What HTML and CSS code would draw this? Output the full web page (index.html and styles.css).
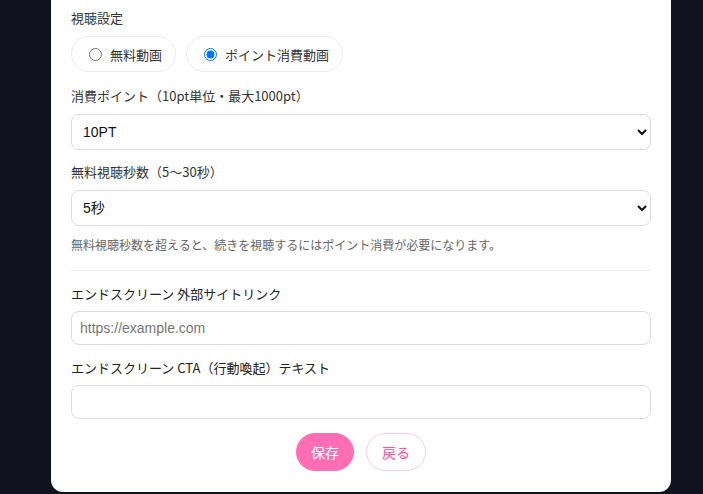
FILE: index.html
```html
<!DOCTYPE html>
<html lang="ja">

<head>
    <meta charset="UTF-8">
    <meta name="viewport" content="width=device-width, initial-scale=1.0">
    <title>動画設定</title>
    <link rel="stylesheet" href="styles.css">
</head>

<body>
    <div class="card">
        <div class="field field-first">
            <div class="label">視聴設定</div>
            <div class="radio-group">
                <label class="pill"><input type="radio" name="mode"> 無料動画</label>
                <label class="pill"><input type="radio" name="mode" checked> ポイント消費動画</label>
            </div>
        </div>

        <div class="field">
            <div class="label">消費ポイント（10pt単位・最大1000pt）</div>
            <select class="control">
                <option>10PT</option>
            </select>
        </div>

        <div class="field">
            <div class="label">無料視聴秒数（5〜30秒）</div>
            <select class="control">
                <option>5秒</option>
            </select>
            <p class="help">無料視聴秒数を超えると、続きを視聴するにはポイント消費が必要になります。</p>
        </div>

        <hr class="divider">

        <div class="field field-end">
            <div class="label label-dark">エンドスクリーン 外部サイトリンク</div>
            <input class="control input" type="text" placeholder="https://example.com">
        </div>

        <div class="field field-end">
            <div class="label label-dark">エンドスクリーン CTA（行動喚起）テキスト</div>
            <input class="control input" type="text">
        </div>

        <div class="actions">
            <button class="btn btn-primary">保存</button>
            <button class="btn btn-outline">戻る</button>
        </div>
    </div>
</body>

</html>
```

FILE: styles.css
```css
body {
    margin: 0;
    background-color: #10131f;
    font-family: "Noto Sans CJK JP", "Liberation Sans", sans-serif;
    color: #333;
}

.card {
    width: 580px;
    margin: 0 auto 2px 51px;
    background: #fff;
    border-radius: 0 0 12px 12px;
    padding: 9px 20px 21px;
}

.field {
    margin-bottom: 13px;
}

.field-first {
    margin-bottom: 15px;
}

.field-end {
    margin-bottom: 14px;
}

.label {
    font-size: 13px;
    line-height: 18px;
    margin-bottom: 9px;
}

.label-dark {
    color: #222;
    margin-bottom: 8px;
}

.radio-group {
    display: flex;
    gap: 10px;
}

.pill {
    display: flex;
    align-items: center;
    gap: 8px;
    height: 34px;
    padding: 0 13px 0 17px;
    border: 1px solid #ececec;
    border-radius: 18px;
    font-size: 13px;
    color: #333;
}

.pill input {
    margin: 0;
    width: 13px;
    height: 13px;
}

.control {
    display: block;
    width: 100%;
    box-sizing: border-box;
    height: 36px;
    border: 1px solid #dcdcdc;
    border-radius: 8px;
    background: #fff;
    padding: 0 7px;
    font-family: "Liberation Sans", "Noto Sans CJK JP", sans-serif;
    font-size: 14px;
    color: #111;
}

.input {
    height: 34px;
    padding: 0 8px;
}

.input::placeholder {
    color: #777;
}

.help {
    margin: 11px 0 0;
    font-size: 12px;
    line-height: 16px;
    color: #666;
}

.divider {
    border: none;
    border-top: 1px solid #eee;
    margin: 17px 0 14px;
}

.actions {
    display: flex;
    justify-content: center;
    gap: 12px;
}

.btn {
    height: 38px;
    padding: 0 15px;
    border-radius: 19px;
    font-family: "Noto Sans CJK JP", sans-serif;
    font-size: 14px;
    cursor: pointer;
}

.btn-primary {
    padding: 0 14px;
    background-color: #ff6eb4;
    border: 1px solid #ff6eb4;
    color: #fff;
}

.btn-outline {
    background: #fff;
    border: 1px solid #ffcde4;
    color: #ff4fa0;
}
```
